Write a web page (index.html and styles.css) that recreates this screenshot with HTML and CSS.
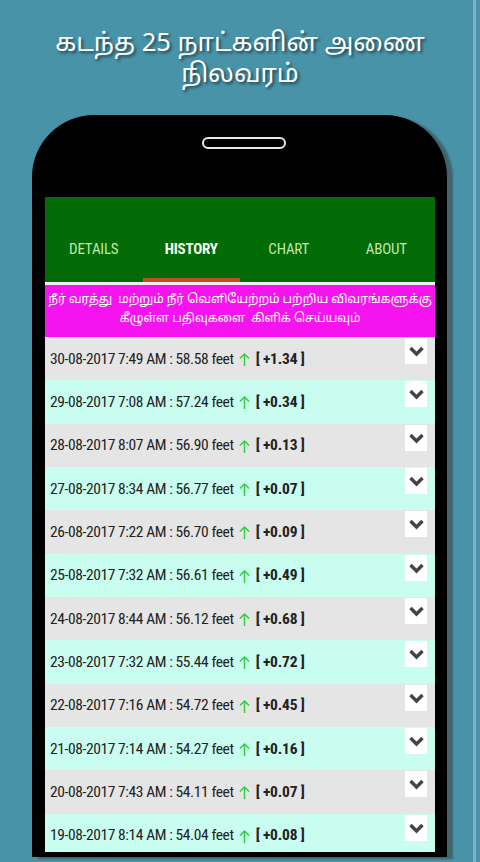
FILE: index.html
```html
<!DOCTYPE html>
<html>
<head>
<meta charset="utf-8">
<link rel="stylesheet" href="styles.css">
</head>
<body>
<h1 class="title">கடந்த 25 நாட்களின் அணை<br>நிலவரம்</h1>
<div class="phone">
  <div class="speaker"></div>
  <div class="screen">
    <div class="tabs">
      <div class="tab">DETAILS</div>
      <div class="tab active">HISTORY</div>
      <div class="tab">CHART</div>
      <div class="tab">ABOUT</div>
    </div>
    <div class="sep"></div>
    <div class="notice">நீர் வரத்து &nbsp;மற்றும் நீர் வெளியேற்றம் பற்றிய விவரங்களுக்கு<br>கீழுள்ள பதிவுகளை &nbsp;கிளிக் செய்யவும்</div>
    <div class="list">
      <div class="row"><span class="txt">30-08-2017 7:49 AM : 58.58 feet</span><svg class="up" viewBox="0 0 12 16"><path d="M6 15V2M1 7l5-5 5 5"/></svg><span class="chg">[ +1.34 ]</span><span class="chev"><svg viewBox="0 0 16 12"><path d="M2 3l6 6 6-6"/></svg></span></div>
      <div class="row"><span class="txt">29-08-2017 7:08 AM : 57.24 feet</span><svg class="up" viewBox="0 0 12 16"><path d="M6 15V2M1 7l5-5 5 5"/></svg><span class="chg">[ +0.34 ]</span><span class="chev"><svg viewBox="0 0 16 12"><path d="M2 3l6 6 6-6"/></svg></span></div>
      <div class="row"><span class="txt">28-08-2017 8:07 AM : 56.90 feet</span><svg class="up" viewBox="0 0 12 16"><path d="M6 15V2M1 7l5-5 5 5"/></svg><span class="chg">[ +0.13 ]</span><span class="chev"><svg viewBox="0 0 16 12"><path d="M2 3l6 6 6-6"/></svg></span></div>
      <div class="row"><span class="txt">27-08-2017 8:34 AM : 56.77 feet</span><svg class="up" viewBox="0 0 12 16"><path d="M6 15V2M1 7l5-5 5 5"/></svg><span class="chg">[ +0.07 ]</span><span class="chev"><svg viewBox="0 0 16 12"><path d="M2 3l6 6 6-6"/></svg></span></div>
      <div class="row"><span class="txt">26-08-2017 7:22 AM : 56.70 feet</span><svg class="up" viewBox="0 0 12 16"><path d="M6 15V2M1 7l5-5 5 5"/></svg><span class="chg">[ +0.09 ]</span><span class="chev"><svg viewBox="0 0 16 12"><path d="M2 3l6 6 6-6"/></svg></span></div>
      <div class="row"><span class="txt">25-08-2017 7:32 AM : 56.61 feet</span><svg class="up" viewBox="0 0 12 16"><path d="M6 15V2M1 7l5-5 5 5"/></svg><span class="chg">[ +0.49 ]</span><span class="chev"><svg viewBox="0 0 16 12"><path d="M2 3l6 6 6-6"/></svg></span></div>
      <div class="row"><span class="txt">24-08-2017 8:44 AM : 56.12 feet</span><svg class="up" viewBox="0 0 12 16"><path d="M6 15V2M1 7l5-5 5 5"/></svg><span class="chg">[ +0.68 ]</span><span class="chev"><svg viewBox="0 0 16 12"><path d="M2 3l6 6 6-6"/></svg></span></div>
      <div class="row"><span class="txt">23-08-2017 7:32 AM : 55.44 feet</span><svg class="up" viewBox="0 0 12 16"><path d="M6 15V2M1 7l5-5 5 5"/></svg><span class="chg">[ +0.72 ]</span><span class="chev"><svg viewBox="0 0 16 12"><path d="M2 3l6 6 6-6"/></svg></span></div>
      <div class="row"><span class="txt">22-08-2017 7:16 AM : 54.72 feet</span><svg class="up" viewBox="0 0 12 16"><path d="M6 15V2M1 7l5-5 5 5"/></svg><span class="chg">[ +0.45 ]</span><span class="chev"><svg viewBox="0 0 16 12"><path d="M2 3l6 6 6-6"/></svg></span></div>
      <div class="row"><span class="txt">21-08-2017 7:14 AM : 54.27 feet</span><svg class="up" viewBox="0 0 12 16"><path d="M6 15V2M1 7l5-5 5 5"/></svg><span class="chg">[ +0.16 ]</span><span class="chev"><svg viewBox="0 0 16 12"><path d="M2 3l6 6 6-6"/></svg></span></div>
      <div class="row"><span class="txt">20-08-2017 7:43 AM : 54.11 feet</span><svg class="up" viewBox="0 0 12 16"><path d="M6 15V2M1 7l5-5 5 5"/></svg><span class="chg">[ +0.07 ]</span><span class="chev"><svg viewBox="0 0 16 12"><path d="M2 3l6 6 6-6"/></svg></span></div>
      <div class="row"><span class="txt">19-08-2017 8:14 AM : 54.04 feet</span><svg class="up" viewBox="0 0 12 16"><path d="M6 15V2M1 7l5-5 5 5"/></svg><span class="chg">[ +0.08 ]</span><span class="chev"><svg viewBox="0 0 16 12"><path d="M2 3l6 6 6-6"/></svg></span></div>
    </div>
  </div>
</div>
</body>
</html>
```
FILE: styles.css
```css
html, body {
  margin: 0;
  padding: 0;
}
body {
  width: 480px;
  height: 862px;
  overflow: hidden;
  background: linear-gradient(to right, #4893a8 0, #4893a8 473px, #7db3c3 473px, #7db3c3 476px, #4893a8 476px);
  font-family: "Roboto Condensed", "Liberation Sans Narrow", Roboto, "Noto Sans Tamil", "Lohit Tamil", sans-serif;
}
.title {
  margin: 0;
  padding-top: 29px;
  height: 115px;
  box-sizing: border-box;
  text-align: center;
  color: #fff;
  font-family: "Noto Sans Tamil", "Lohit Tamil", "Noto Sans", sans-serif;
  font-weight: normal;
  font-size: 25.5px;
  line-height: 31px;
  text-shadow: 2px 2px 3px rgba(0,0,0,0.55);
}
.phone {
  margin-left: 32px;
  width: 415px;
  height: 742px;
  box-sizing: border-box;
  background: #000;
  border-radius: 62px 62px 0 0;
  padding: 22px 12px 5px 13px;
  box-shadow: 6px 2px 2px rgba(60,60,60,0.55);
  display: flex;
  flex-direction: column;
}
.speaker {
  align-self: center;
  width: 80px;
  height: 8px;
  border: 2px solid #e8e8e8;
  border-radius: 6px;
  margin-left: 8px;
  margin-bottom: 48px;
}
.screen {
  flex: 1;
  background: #fff;
  overflow: hidden;
  display: flex;
  flex-direction: column;
}
.tabs {
  height: 85px;
  background: #036b05;
  display: grid;
  grid-template-columns: repeat(4, 1fr);
  flex-shrink: 0;
}
.tab {
  display: flex;
  align-items: center;
  justify-content: center;
  padding-top: 19px;
  color: #bfe8a8;
  font-size: 15px;
  letter-spacing: -0.2px;
  box-sizing: border-box;
}
.tab.active {
  color: #f4fff0;
  font-weight: bold;
  border-bottom: 4px solid #c54a2a;
  padding-top: 23px;
}
.sep {
  height: 3px;
  background: #f2eef2;
  flex-shrink: 0;
}
.notice {
  height: 52px;
  flex-shrink: 0;
  background: #f514f0;
  color: #fff;
  text-align: center;
  font-family: "Noto Sans Tamil", "Lohit Tamil", "Noto Sans", sans-serif;
  font-size: 12.3px;
  letter-spacing: -0.1px;
  line-height: 19px;
  padding-top: 6px;
  box-sizing: border-box;
  white-space: nowrap;
}
.list {
  display: flex;
  flex-direction: column;
}
.row {
  height: 43.33px;
  flex-shrink: 0;
  display: flex;
  align-items: center;
  padding-left: 5px;
  position: relative;
  background: #e5e5e5;
  color: #222;
  font-size: 15.5px;
}
.row:nth-child(even) {
  background: #c8fdf0;
}
.txt {
  letter-spacing: -0.4px;
}
.up {
  width: 11px;
  height: 15px;
  margin: 2px 6px 0 5px;
  fill: none;
  stroke: #33cc44;
  stroke-width: 1.6;
}
.chg {
  font-weight: bold;
  letter-spacing: -0.2px;
}
.chev {
  position: absolute;
  top: 1px;
  left: 360px;
  width: 22px;
  height: 26px;
  background: #fff;
  display: flex;
  align-items: center;
  justify-content: center;
}
.chev svg {
  width: 17px;
  height: 12px;
  fill: none;
  stroke: #444;
  stroke-width: 3.4;
}
```
